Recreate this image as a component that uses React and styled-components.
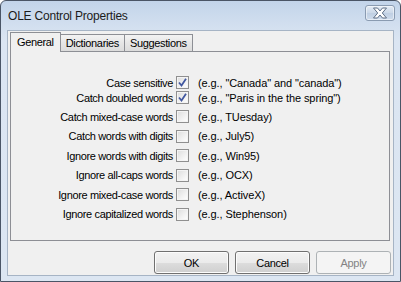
import React from "react";
import styled, { createGlobalStyle } from "styled-components";

const Global = createGlobalStyle`
  html, body { margin: 0; padding: 0; background: #ffffff; }
  body { font-family: "Liberation Sans", Arial, sans-serif; }
`;

const rows = [
  { label: "Case sensitive", ex: "(e.g., \"Canada\" and \"canada\")", on: true, h: 15 },
  { label: "Catch doubled words", ex: "(e.g., \"Paris in the the spring\")", on: true, h: 15 },
  { label: "Catch mixed-case words", ex: "(e.g., TUesday)", h: 19.5, top: 2 },
  { label: "Catch words with digits", ex: "(e.g., July5)", h: 19.5 },
  { label: "Ignore words with digits", ex: "(e.g., Win95)", h: 19.5 },
  { label: "Ignore all-caps words", ex: "(e.g., OCX)", h: 19.5 },
  { label: "Ignore mixed-case words", ex: "(e.g., ActiveX)", h: 19.5 },
  { label: "Ignore capitalized words", ex: "(e.g., Stephenson)", h: 19.5 },
];

function CheckBox({ checked }) {
  return (
    <BoxWrapper>
      {checked && (
        <svg width="9" height="9" viewBox="0 0 9 9">
          <path d="M1 4.5 L3.5 7.5 L8 0.8" fill="none" stroke="#4258a0" strokeWidth="1.8" />
        </svg>
      )}
    </BoxWrapper>
  );
}

function CloseGlyph() {
  return (
    <svg width="16" height="12" viewBox="0 0 16 12">
      <path
        d="M1.5 1 L5.5 1 L8 4 L10.5 1 L14.5 1 L10.3 6 L14.5 11 L10.5 11 L8 8 L5.5 11 L1.5 11 L5.7 6 Z"
        fill="#ffffff"
        stroke="#5f6f86"
        strokeWidth="1"
        strokeLinejoin="round"
      />
    </svg>
  );
}

export default function App() {
  return (
    <>
      <Global />
      <Window>
        <TitleBar>
          <Title>OLE Control Properties</Title>
          <CloseButton>
            <CloseGlyph />
          </CloseButton>
        </TitleBar>
        <Client>
          <TabStrip>
            <Tab $active>General</Tab>
            <Tab>Dictionaries</Tab>
            <Tab>Suggestions</Tab>
          </TabStrip>
          <Panel>
            {rows.map((r) => (
              <Row key={r.label} $h={r.h} $top={r.top || 0}>
                <Label>{r.label}</Label>
                <CheckBox checked={r.on} />
                <Example>{r.ex}</Example>
              </Row>
            ))}
          </Panel>
          <ButtonRow>
            <Button>OK</Button>
            <Button>Cancel</Button>
            <Button disabled>Apply</Button>
          </ButtonRow>
        </Client>
      </Window>
    </>
  );
}

const Window = styled.div`
  width: 401px;
  height: 282px;
  box-sizing: border-box;
  border: 1px solid #4a5566;
  border-radius: 6px 6px 0 0;
  background: linear-gradient(#c2d4ea 0px, #d2dfef 24px, #dbe5f2 40px, #dce6f2 100%);
  display: flex;
  flex-direction: column;
  overflow: hidden;
`;

const TitleBar = styled.div`
  height: 29px;
  display: flex;
  justify-content: space-between;
  align-items: flex-start;
  padding: 4px 5px 0 7px;
  box-sizing: border-box;
  flex-shrink: 0;
`;

const Title = styled.div`
  font-family: "Liberation Sans", Arial, sans-serif;
  font-size: 12px;
  letter-spacing: -0.2px;
  color: #1b1b1b;
  line-height: 14px;
  padding-top: 4px;
`;

const CloseButton = styled.div`
  width: 30px;
  height: 16px;
  box-sizing: border-box;
  border: 1px solid #8a9bb1;
  border-radius: 3px;
  background: linear-gradient(#e3ebf5, #cbd8e8 50%, #bfcfe3 51%, #cfdcec);
  box-shadow: inset 0 0 0 1px rgba(255, 255, 255, 0.5);
  display: flex;
  align-items: center;
  justify-content: center;
`;

const Client = styled.div`
  flex: 1;
  margin: 0 6px 6px 6px;
  border: 1px solid #a6b4c5;
  background: #f0f0f0;
  padding: 1px 2px 1px 2px;
  display: flex;
  flex-direction: column;
`;

const TabStrip = styled.div`
  display: flex;
  align-items: flex-end;
  height: 19px;
  position: relative;
  z-index: 1;
`;

const Tab = styled.div`
  font-family: "Liberation Sans", Arial, sans-serif;
  font-size: 11px;
  letter-spacing: -0.35px;
  color: #000;
  box-sizing: border-box;
  border: 1px solid #8d8f95;
  border-bottom: none;
  margin-left: ${(p) => (p.$active ? "0" : "-1px")};
  height: ${(p) => (p.$active ? "20px" : "17px")};
  margin-bottom: ${(p) => (p.$active ? "-1px" : "0")};
  padding: ${(p) => (p.$active ? "3px 6px 0 6px" : "2px 5px 0 5px")};
  background: ${(p) => (p.$active ? "#f0f0f0" : "linear-gradient(#f3f3f3, #e6e6e6 50%, #dcdcdc)")};
  z-index: ${(p) => (p.$active ? 2 : 1)};
  line-height: 13px;
`;

const Panel = styled.div`
  height: 190px;
  box-sizing: border-box;
  margin-right: 1px;
  border: 1px solid #8d8f95;
  background: #f0f0f0;
  padding-top: 23px;
  display: flex;
  flex-direction: column;
`;

const Row = styled.div`
  display: flex;
  align-items: center;
  height: ${(p) => p.$h}px;
  margin-top: ${(p) => p.$top}px;
  font-family: "Liberation Sans", Arial, sans-serif;
  font-size: 11px;
  color: #000;
`;

const Label = styled.div`
  width: 162px;
  text-align: right;
  white-space: nowrap;
  letter-spacing: -0.35px;
`;

const Example = styled.div`
  white-space: nowrap;
  letter-spacing: -0.1px;
`;

const BoxWrapper = styled.div`
  width: 13px;
  height: 13px;
  box-sizing: border-box;
  margin: 0 9px 0 3px;
  border: 1px solid #8f8f8f;
  background: linear-gradient(135deg, #dcdcdc, #f6f6f6 70%, #ffffff);
  box-shadow: inset 0 0 0 1px #f4f4f4;
  display: flex;
  align-items: center;
  justify-content: center;
`;

const ButtonRow = styled.div`
  display: flex;
  justify-content: flex-end;
  gap: 6px;
  margin-top: 10px;
`;

const Button = styled.button`
  width: 75px;
  height: 23px;
  box-sizing: border-box;
  padding: 0;
  font-family: "Liberation Sans", Arial, sans-serif;
  font-size: 11px;
  letter-spacing: -0.3px;
  color: #000;
  border: 1px solid #707070;
  border-radius: 3px;
  background: linear-gradient(#f2f2f2, #ebebeb 50%, #dddddd 51%, #cfcfcf);
  box-shadow: inset 0 0 0 1px #fcfcfc;
  &:disabled {
    color: #838383;
    border-color: #adb2b5;
    background: #f4f4f4;
    box-shadow: none;
  }
`;
